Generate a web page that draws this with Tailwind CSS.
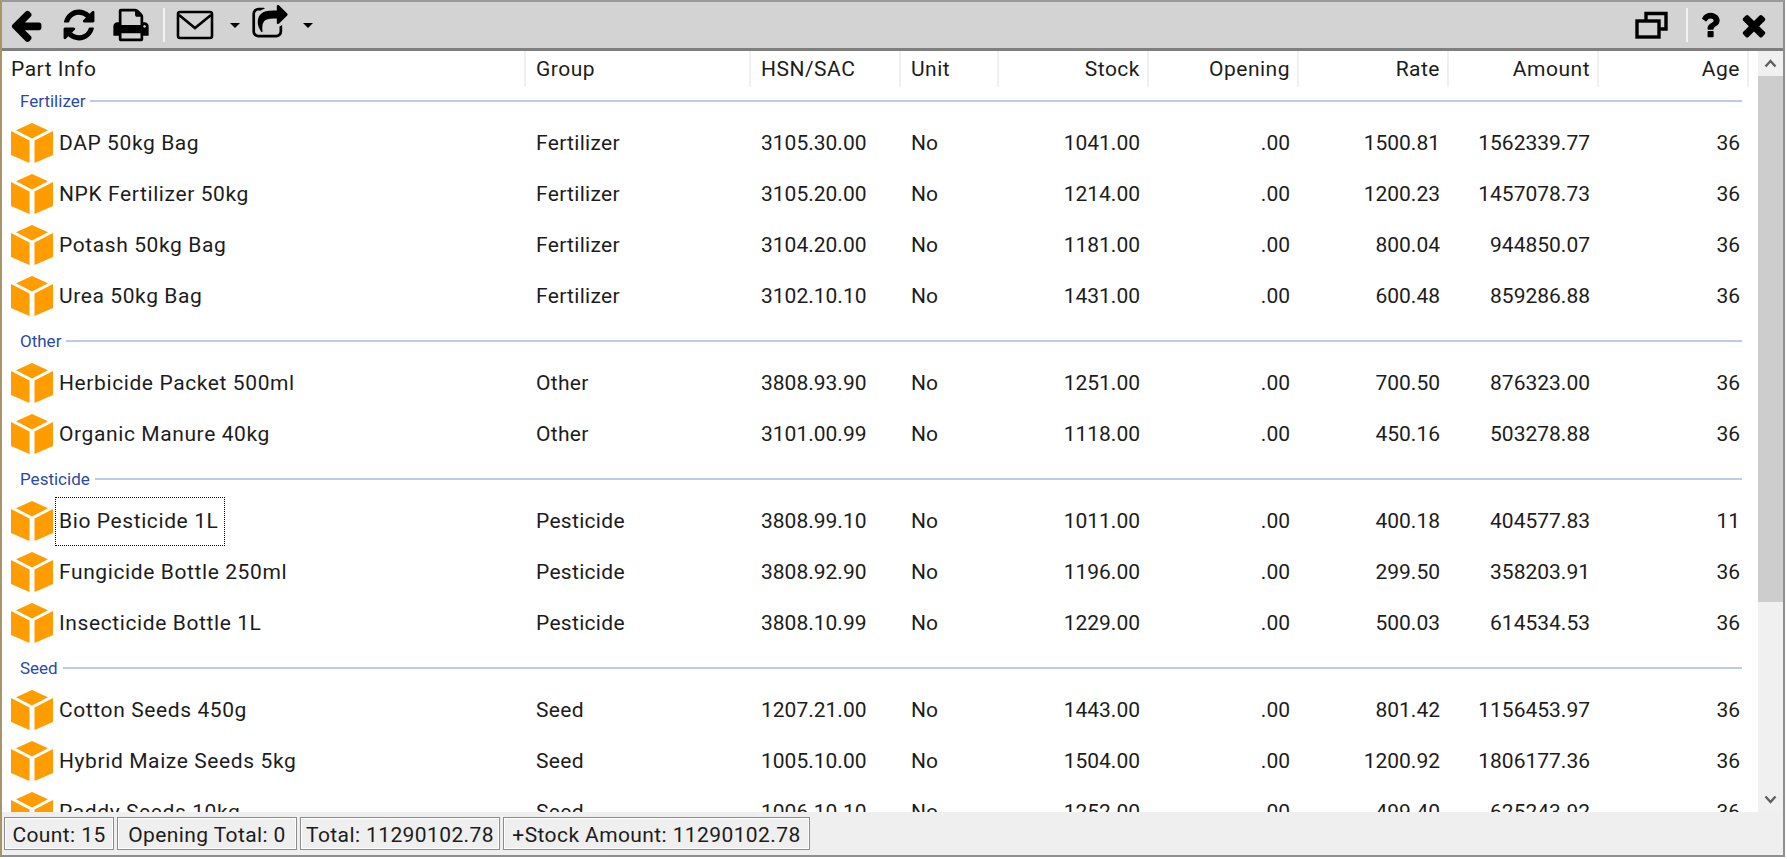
<!doctype html>
<html lang="en">
<head>
<meta charset="UTF-8" />
<title>Stock List</title>
<script src="https://cdn.jsdelivr.net/npm/@tailwindcss/browser@4"></script>
</head>
<body class="w-[1787px] h-[859px] overflow-hidden bg-white font-['Roboto',sans-serif] text-[21px] text-[#1c1c1c]">
<div class="w-[1785px] h-[857px] flex flex-col border-t-2 border-l-2 border-r-2 border-b-2 border-t-[#9a9a9a] border-l-[#a89468] border-r-[#8f8f8f] border-b-[#8f8f8f] bg-[#efefef]">

  <!-- toolbar -->
  <div class="h-[46px] shrink-0 bg-[#d3d3d3] border-b-[3px] border-[#7f7f7f] flex items-center pl-[6px] pr-[12px] box-content">
    <svg class="w-[36px] h-[36px]" viewBox="0 0 1792 1792"><path d="M1664 896v128q0 53-32.5 90.5t-84.5 37.5h-704l293 294q38 36 38 90t-38 90l-75 76q-37 37-90 37-52 0-91-37l-651-652q-37-37-37-90 0-52 37-91l651-650q38-38 91-38 52 0 90 38l75 74q38 38 38 91t-38 91l-293 293h704q52 0 84.5 37.5t32.5 90.5z"/></svg>
    <svg class="w-[36px] h-[36px] ml-[17px]" viewBox="0 0 1792 1792"><path d="M1639 1056q0 5-1 7-64 268-268 434.5t-478 166.5q-146 0-282.5-55t-243.5-157l-129 129q-19 19-45 19t-45-19-19-45v-448q0-26 19-45t45-19h448q26 0 45 19t19 45-19 45l-137 137q71 66 161 102t187 36q134 0 250-65t186-179q11-17 53-117 8-23 30-23h192q13 0 22.5 9.5t9.5 22.5zm25-800v448q0 26-19 45t-45 19h-448q-26 0-45-19t-19-45 19-45l138-138q-148-137-349-137-134 0-250 65t-186 179q-11 17-53 117-8 23-30 23h-199q-13 0-22.5-9.5t-9.5-22.5v-7q65-268 270-434.5t480-166.5q146 0 284 55.5t245 156.5l130-129q19-19 45-19t45 19 19 45z"/></svg>
    <svg class="w-[38px] h-[38px] ml-[15px]" viewBox="0 0 1792 1792"><path d="M448 1536h896v-256h-896v256zm0-640h896v-384h-160q-40 0-68-28t-28-68v-160h-640v640zm1152 64q0-26-19-45t-45-19-45 19-19 45 19 45 45 19 45-19 19-45zm128 0v416q0 13-9.5 22.5t-22.5 9.5h-224v160q0 40-28 68t-68 28h-960q-40 0-68-28t-28-68v-160h-224q-13 0-22.5-9.5t-9.5-22.5v-416q0-79 56.5-135.5t135.5-56.5h64v-544q0-40 28-68t68-28h672q40 0 88 20t76 48l152 152q28 28 48 76t20 88v256h64q79 0 135.5 56.5t56.5 135.5z"/></svg>
    <div class="w-[2px] h-[34px] bg-[#f2f2f2] ml-[13px]"></div>
    <svg class="w-[38px] h-[30px] ml-[11px]" viewBox="0 0 38 30" fill="none" stroke="#000" stroke-width="2.6"><rect x="2" y="2" width="34" height="26" rx="2"/><path d="M3 5 L19 18 L35 5"/></svg>
    <div class="ml-[16px] w-0 h-0 border-x-[5px] border-t-[5px] border-x-transparent border-t-black"></div>
    <svg class="w-[38px] h-[38px] ml-[11px] -mt-[3px]" viewBox="0 0 1792 1792"><path d="M1472 989v259q0 119-84.5 203.5t-203.5 84.5h-832q-119 0-203.5-84.5t-84.5-203.5v-832q0-119 84.5-203.5t203.5-84.5h255q13 0 22.5 9.5t9.5 22.5q0 27-26 32-77 26-133 60-10 4-16 4h-112q-66 0-113 47t-47 113v832q0 66 47 113t113 47h832q66 0 113-47t47-113v-214q0-19 18-29 28-13 54-37 16-16 35-8 21 9 21 29zm237-496l-384 384q-18 19-45 19-12 0-25-5-39-17-39-59v-192h-160q-323 0-438 131-119 137-74 473 3 23-20 34-8 2-12 2-16 0-26-13-10-14-21-31t-39.5-68.5-49.5-99.5-38.5-114-17.5-122q0-49 3.5-91t14-90 28-88 47-81.5 68.5-74 94.5-61.5 124.5-48.5 159.5-30.5 196.5-11h160v-192q0-42 39-59 13-5 25-5 26 0 45 19l384 384q19 19 19 45t-19 45z"/></svg>
    <div class="ml-[14px] w-0 h-0 border-x-[5px] border-t-[5px] border-x-transparent border-t-black"></div>
    <svg class="w-[34px] h-[28px] ml-auto" viewBox="0 0 34 28" fill="none" stroke="#000" stroke-width="3.4"><path d="M11 9V2.5H31V18H24"/><rect x="2" y="10" width="22" height="16"/></svg>
    <div class="w-[2px] h-[34px] bg-[#f2f2f2] ml-[17px]"></div>
    <svg class="w-[34px] h-[34px] ml-[5px]" viewBox="0 0 1792 1792"><path d="M1088 1256v240q0 16-12 28t-28 12h-240q-16 0-28-12t-12-28v-240q0-16 12-28t28-12h240q16 0 28 12t12 28zm316-600q0 54-15.5 101t-35 76.5-55 59.5-57.5 43.5-61 35.5q-41 23-68.5 65t-27.5 67q0 17-12 32.5t-28 15.5h-240q-15 0-25.5-18.5t-10.5-37.5v-45q0-83 65-156.5t143-108.5q59-27 84-56t25-76q0-42-46.5-74t-107.5-32q-65 0-108 29-35 25-107 115-13 16-31 16-12 0-25-8l-164-125q-13-10-15.5-25t5.5-28q160-266 464-266 80 0 161 31t146 83 106 127.5 41 158.5z"/></svg>
    <svg class="w-[34px] h-[34px] ml-[10px]" viewBox="0 0 1792 1792"><path d="M1490 1322q0 40-28 68l-136 136q-28 28-68 28t-68-28l-294-294-294 294q-28 28-68 28t-68-28l-136-136q-28-28-28-68t28-68l294-294-294-294q-28-28-28-68t28-68l136-136q28-28 68-28t68 28l294 294 294-294q28-28 68-28t68 28l136 136q28 28 28 68t-28 68l-294 294 294 294q28 28 28 68z"/></svg>
  </div>

  <!-- list + scrollbar -->
  <div class="flex flex-1 min-h-0">
    <div class="w-[1756px] flex flex-col bg-white">
      <div class="h-[36px] shrink-0 grid grid-cols-[524px_225px_150px_98px_150px_150px_150px_150px_150px] tracking-[0.5px]">
        <div class="px-[9px] pt-[2px] flex items-center border-r-2 border-[#f0f0f0]">Part Info</div>
        <div class="px-[10px] pt-[2px] flex items-center border-r-2 border-[#f0f0f0]">Group</div>
        <div class="px-[10px] pt-[2px] flex items-center border-r-2 border-[#f0f0f0]">HSN/SAC</div>
        <div class="px-[10px] pt-[2px] flex items-center border-r-2 border-[#f0f0f0]">Unit</div>
        <div class="px-[7px] pt-[2px] flex items-center justify-end border-r-2 border-[#f0f0f0]">Stock</div>
        <div class="px-[7px] pt-[2px] flex items-center justify-end border-r-2 border-[#f0f0f0]">Opening</div>
        <div class="px-[7px] pt-[2px] flex items-center justify-end border-r-2 border-[#f0f0f0]">Rate</div>
        <div class="px-[7px] pt-[2px] flex items-center justify-end border-r-2 border-[#f0f0f0]">Amount</div>
        <div class="px-[7px] pt-[2px] flex items-center justify-end border-r-2 border-[#f0f0f0]">Age</div>
      </div>
      <div id="rows" class="flex-1 min-h-0 overflow-hidden -mt-[4px]"></div>
    </div>
    <div class="w-[25px] flex flex-col items-center bg-[#f0f0f0]">
      <div class="h-[25px] shrink-0 flex items-center justify-center">
        <svg class="w-[13px] h-[9px]" viewBox="0 0 13 9" fill="none" stroke="#5f5f5f" stroke-width="2.4"><path d="M1.5 7.5 L6.5 2 L11.5 7.5"/></svg>
      </div>
      <div class="w-full h-[526px] bg-[#cdcdcd]"></div>
      <div class="mt-auto h-[25px] flex items-center justify-center">
        <svg class="w-[13px] h-[9px]" viewBox="0 0 13 9" fill="none" stroke="#5f5f5f" stroke-width="2.4"><path d="M1.5 1.5 L6.5 7 L11.5 1.5"/></svg>
      </div>
    </div>
  </div>

  <!-- status bar -->
  <div class="h-[43px] shrink-0 flex items-start gap-[3px] pl-[2px] pt-[5px] text-[21px] leading-none tracking-[0.4px]">
    <div class="w-[110px] h-[33px] pt-[4px] flex items-center justify-center border border-[#8c8c8c] shadow-[inset_0_0_0_1px_#ffffff]">Count: 15</div>
    <div class="w-[180px] h-[33px] pt-[4px] flex items-center justify-center border border-[#8c8c8c] shadow-[inset_0_0_0_1px_#ffffff]">Opening Total: 0</div>
    <div class="w-[200px] h-[33px] pt-[4px] flex items-center justify-center border border-[#8c8c8c] shadow-[inset_0_0_0_1px_#ffffff]">Total: 11290102.78</div>
    <div class="w-[307px] h-[33px] pt-[4px] flex items-center justify-center border border-[#8c8c8c] shadow-[inset_0_0_0_1px_#ffffff]">+Stock Amount: 11290102.78</div>
  </div>
</div>

<script>
  const groups = [
    ["Fertilizer", [
      ["DAP 50kg Bag", "3105.30.00", "1041.00", "1500.81", "1562339.77", "36"],
      ["NPK Fertilizer 50kg", "3105.20.00", "1214.00", "1200.23", "1457078.73", "36"],
      ["Potash 50kg Bag", "3104.20.00", "1181.00", "800.04", "944850.07", "36"],
      ["Urea 50kg Bag", "3102.10.10", "1431.00", "600.48", "859286.88", "36"],
    ]],
    ["Other", [
      ["Herbicide Packet 500ml", "3808.93.90", "1251.00", "700.50", "876323.00", "36"],
      ["Organic Manure 40kg", "3101.00.99", "1118.00", "450.16", "503278.88", "36"],
    ]],
    ["Pesticide", [
      ["Bio Pesticide 1L", "3808.99.10", "1011.00", "400.18", "404577.83", "11"],
      ["Fungicide Bottle 250ml", "3808.92.90", "1196.00", "299.50", "358203.91", "36"],
      ["Insecticide Bottle 1L", "3808.10.99", "1229.00", "500.03", "614534.53", "36"],
    ]],
    ["Seed", [
      ["Cotton Seeds 450g", "1207.21.00", "1443.00", "801.42", "1156453.97", "36"],
      ["Hybrid Maize Seeds 5kg", "1005.10.00", "1504.00", "1200.92", "1806177.36", "36"],
      ["Paddy Seeds 10kg", "1006.10.10", "1252.00", "499.40", "625243.92", "36"],
    ]],
  ];

  const box = `<svg class="w-[42px] h-[40px] shrink-0 -mt-[2px]" viewBox="0 0 42 40" fill="#ff9c00"><path d="M21 0L37 7.3L21 15.6L5 7.3Z"/><path d="M0 8L18.5 17.6V40L0 32Z"/><path d="M42 8L23.5 17.6V40L42 32Z"/></svg>`;

  let html = "";
  for (const [name, parts] of groups) {
    html += `<div class="h-[36px] flex items-center gap-[5px] pl-[18px] pr-[16px]"><span class="pt-[2px] text-[17px] text-[#2b4aa8]">${name}</span><div class="flex-1 h-[2px] bg-[#bccbe6]"></div></div>`;
    for (const p of parts) {
      const focus = p[0] === "Bio Pesticide 1L";
      const label = focus
        ? `<span class="ml-[2px] px-[3px] pt-[2px] h-[49px] w-[170px] -mt-[1px] flex items-center border border-dotted border-black tracking-[0.6px]">${p[0]}</span>`
        : `<span class="ml-[6px] tracking-[0.6px]">${p[0]}</span>`;
      html += `<div class="h-[51px] pb-[2px] grid grid-cols-[524px_225px_150px_98px_150px_150px_150px_150px_150px] items-center">
        <div class="pl-[9px] flex items-center">${box}${label}</div>
        <div class="px-[10px] tracking-[0.3px]">${name}</div>
        <div class="px-[10px]">${p[1]}</div>
        <div class="px-[10px]">No</div>
        <div class="px-[9px] text-right">${p[2]}</div>
        <div class="px-[9px] text-right">.00</div>
        <div class="px-[9px] text-right">${p[3]}</div>
        <div class="px-[9px] text-right">${p[4]}</div>
        <div class="px-[9px] text-right">${p[5]}</div>
      </div>`;
    }
  }
  document.getElementById("rows").innerHTML = html;
</script>
</body>
</html>
